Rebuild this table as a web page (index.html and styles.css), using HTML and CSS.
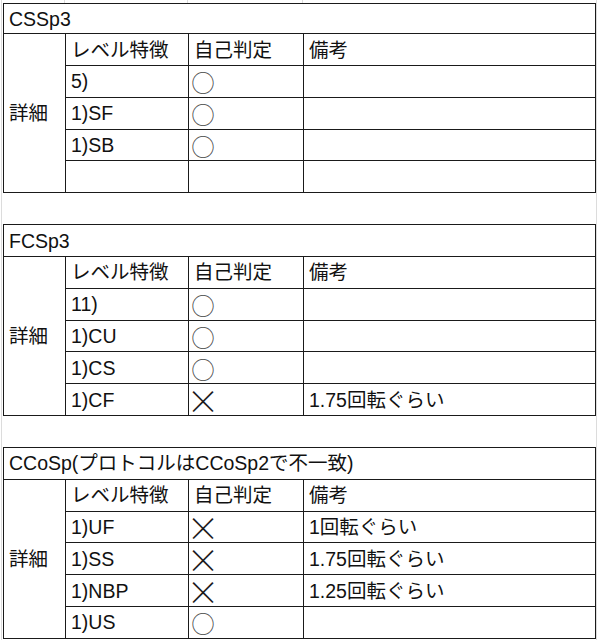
FILE: index.html
```html
<!DOCTYPE html>
<html lang="ja">
<head>
<meta charset="utf-8">
<title>Sheet</title>
<link rel="stylesheet" href="styles.css">
</head>
<body>
<div class="sheet">
  <div class="topgrid"><span></span><span></span><span></span><span></span></div>

  <table class="block">
    <colgroup><col class="c1"><col class="c2"><col class="c3"><col class="c4"></colgroup>
    <tr class="title first"><td colspan="4">CSSp3</td></tr>
    <tr><td rowspan="5" class="label">詳細</td><td>レベル特徴</td><td>自己判定</td><td>備考</td></tr>
    <tr><td>5)</td><td><span class="mark ok">○</span></td><td></td></tr>
    <tr><td>1)SF</td><td><span class="mark ok">○</span></td><td></td></tr>
    <tr><td>1)SB</td><td><span class="mark ok">○</span></td><td></td></tr>
    <tr><td></td><td></td><td></td></tr>
  </table>

  <table class="block gap">
    <colgroup><col class="c1"><col class="c2"><col class="c3"><col class="c4"></colgroup>
    <tr class="title"><td colspan="4">FCSp3</td></tr>
    <tr><td rowspan="5" class="label">詳細</td><td>レベル特徴</td><td>自己判定</td><td>備考</td></tr>
    <tr><td>11)</td><td><span class="mark ok">○</span></td><td></td></tr>
    <tr><td>1)CU</td><td><span class="mark ok">○</span></td><td></td></tr>
    <tr><td>1)CS</td><td><span class="mark ok">○</span></td><td></td></tr>
    <tr><td>1)CF</td><td><span class="mark ng">×</span></td><td>1.75回転ぐらい</td></tr>
  </table>

  <table class="block gap2">
    <colgroup><col class="c1"><col class="c2"><col class="c3"><col class="c4"></colgroup>
    <tr class="title"><td colspan="4">CCoSp(プロトコルはCCoSp2で不一致)</td></tr>
    <tr><td rowspan="5" class="label">詳細</td><td>レベル特徴</td><td>自己判定</td><td>備考</td></tr>
    <tr><td>1)UF</td><td><span class="mark ng">×</span></td><td>1回転ぐらい</td></tr>
    <tr><td>1)SS</td><td><span class="mark ng">×</span></td><td>1.75回転ぐらい</td></tr>
    <tr><td>1)NBP</td><td><span class="mark ng">×</span></td><td>1.25回転ぐらい</td></tr>
    <tr><td>1)US</td><td><span class="mark ok">○</span></td><td></td></tr>
  </table>
</div>
</body>
</html>
```
FILE: styles.css
```css
html, body {
  margin: 0;
  padding: 0;
  background: #ffffff;
}

body {
  font-family: "Liberation Sans", "Noto Sans CJK JP", sans-serif;
  font-size: 19.5px;
  color: #111111;
}

.sheet {
  width: 596px;
  height: 640px;
  margin-left: 1px;
  border-left: 1px solid #dcdcdc;
  border-right: 1px solid #dcdcdc;
  padding-left: 1px;
  box-sizing: border-box;
  overflow: hidden;
}

.topgrid {
  display: grid;
  grid-template-columns: 62px 123px 115px 1fr;
  height: 3px;
  width: 592px;
}

.topgrid span {
  border-right: 1px solid #dcdcdc;
}

.topgrid span:last-child {
  border-right: none;
}

.block {
  width: 592px;
  table-layout: fixed;
  border-collapse: collapse;
}

.block.gap {
  margin-top: 31px;
}

.block.gap2 {
  margin-top: 31px;
}

.c1 { width: 62px; }
.c2 { width: 123px; }
.c3 { width: 115px; }
.c4 { width: 292px; }

.block td {
  border: 1px solid #1a1a1a;
  padding: 0 0 0 5px;
  height: 30.8px;
  vertical-align: middle;
  white-space: nowrap;
  line-height: 22px;
}

.block tr.first td {
  height: 29.3px;
}

.mark {
  display: block;
  width: 1em;
  height: 20px;
  line-height: 20px;
  text-align: center;
  font-family: "Noto Sans CJK JP", sans-serif;
  position: relative;
}

.mark.ok {
  font-size: 23.5px;
  font-weight: 300;
  margin-left: -2.75px;
  color: #444444;
  top: 1px;
}

.mark.ng {
  font-size: 33px;
  font-weight: 200;
  color: #1a1a1a;
  margin-left: calc(9px - 0.5em);
}
```
